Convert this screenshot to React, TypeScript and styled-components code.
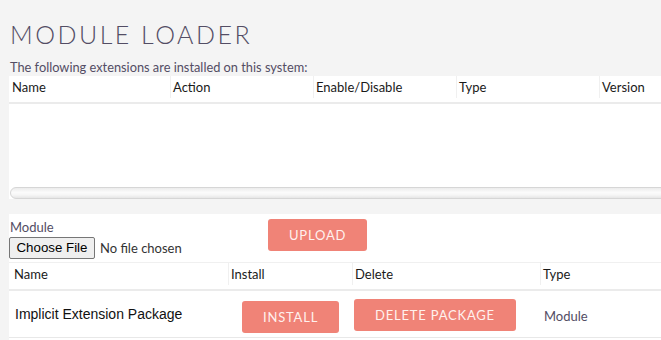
import React from 'react';
import styled, { createGlobalStyle } from 'styled-components';

const GlobalStyle = createGlobalStyle`
  html, body {
    margin: 0;
    background: #f4f4f4;
    overflow: hidden;
  }
  body {
    font-family: Lato, "Open Sans", sans-serif;
    color: #534d64;
  }
`

const Page = styled.div`
  width: 760px;
  padding-left: 9px;
`

const Title = styled.h2`
  margin: 0;
  padding: 19px 0 0 1px;
  font-family: Lato, sans-serif;
  font-weight: 300;
  font-size: 25px;
  line-height: 30px;
  letter-spacing: 2.5px;
  color: #534d64;
`

const Intro = styled.div`
  margin-top: 10px;
  font-size: 12.8px;
  line-height: 17px;
  padding-left: 1px;
  color: #534d64;
`

// the installed extensions list, with its horizontal scroller under it
const ScrollPanel = styled.div`
  background: white;
  height: 123px;
  overflow: hidden;
  display: flex;
  flex-direction: column;
`

const ScrollTrack = styled.div`
  margin: auto 0 0 1px;
  height: 12px;
  box-sizing: border-box;
  border-radius: 6px;
  border: 1px solid #d6d6d6;
  background: linear-gradient(#ececec, #fbfbfb 45%, #f6f6f6 70%, #e6e6e6);
`

const HeaderRow = styled.div<{ $cols: string; $first: number }>`
  display: grid;
  grid-template-columns: ${p => p.$cols};
  padding-bottom: 4px;
  border-bottom: 2px solid #ebebeb;
  > div:first-child {
    padding-left: ${p => p.$first}px;
    border-left: none;
  }
`

const HeadCell = styled.div`
  height: 22px;
  line-height: 22px;
  font-size: 13px;
  color: #1a1a1a;
  padding-left: 2px;
  border-left: 1px solid #f0f0f0;
  white-space: nowrap;
`

const ExtensionTable = styled.div`
  width: 900px;
`

const UploadPanel = styled.div`
  margin-top: 15px;
  background: white;
  height: 200px;
`

const UploadRow = styled.div`
  display: grid;
  grid-template-columns: 259px auto;
  padding-top: 5px;
  padding-bottom: 3px;
`

const Label = styled.div`
  font-size: 13px;
  line-height: 17px;
  padding-left: 1px;
  color: #534d64;
`

const FileInput = styled.input`
  font-family: Lato, sans-serif;
  font-size: 13px;
  color: #333;
  &::file-selector-button {
    font-family: Arial, "Liberation Sans", sans-serif;
    font-size: 13.3px;
    height: 22px;
    width: 86px;
    padding: 0;
    margin-right: 5px;
    background: #efefef;
    border: 1px solid #767676;
    border-radius: 2px;
    color: #000;
  }
`

const ActionButton = styled.button<{ $mt?: number; $ml?: number }>`
  height: 32px;
  padding: 0 21px;
  margin-top: ${p => p.$mt ?? 0}px;
  margin-left: ${p => p.$ml ?? 0}px;
  border: none;
  border-radius: 3px;
  background: #f08377;
  color: #fff1ee;
  font-family: Lato, sans-serif;
  font-size: 13px;
  letter-spacing: 0.8px;
  text-transform: uppercase;
  justify-self: start;
  align-self: start;
`

const PackageTable = styled.div`
  border-top: 1px solid #f0f0f0;
`

const PackageRow = styled.div`
  display: grid;
  grid-template-columns: 219px 124px 188px auto;
  height: 46px;
  border-bottom: 1px solid #e8e8e8;
`

const NameCell = styled.div`
  padding-left: 6px;
  font-family: Arial, "Liberation Sans", sans-serif;
  font-size: 14px;
  color: #111;
  align-self: center;
`

const TypeCell = styled.div`
  padding-left: 4px;
  font-size: 13px;
  color: #534d64;
  align-self: center;
  margin-top: 4px;
`

const extensionCols = ['Name', 'Action', 'Enable/Disable', 'Type', 'Version', 'Uninstall']
const packageCols = ['Name', 'Install', 'Delete', 'Type']

export default function App() {
  return (
    <Page>
      <GlobalStyle />
      <Title>MODULE LOADER</Title>
      <Intro>The following extensions are installed on this system:</Intro>
      <ScrollPanel>
        <ExtensionTable>
          <HeaderRow $cols="161px 143px 143px 143px 143px auto" $first={3}>
            {extensionCols.map(c => <HeadCell key={c}>{c}</HeadCell>)}
          </HeaderRow>
        </ExtensionTable>
        <ScrollTrack />
      </ScrollPanel>
      <UploadPanel>
        <UploadRow>
          <div>
            <Label>Module</Label>
            <FileInput type="file" />
          </div>
          <ActionButton>Upload</ActionButton>
        </UploadRow>
        <PackageTable>
          <HeaderRow $cols="219px 124px 188px auto" $first={5}>
            {packageCols.map(c => <HeadCell key={c}>{c}</HeadCell>)}
          </HeaderRow>
          <PackageRow>
            <NameCell>Implicit Extension Package</NameCell>
            <ActionButton $mt={10} $ml={14}>Install</ActionButton>
            <ActionButton $mt={8} $ml={2}>Delete Package</ActionButton>
            <TypeCell>Module</TypeCell>
          </PackageRow>
        </PackageTable>
      </UploadPanel>
    </Page>
  );
}
